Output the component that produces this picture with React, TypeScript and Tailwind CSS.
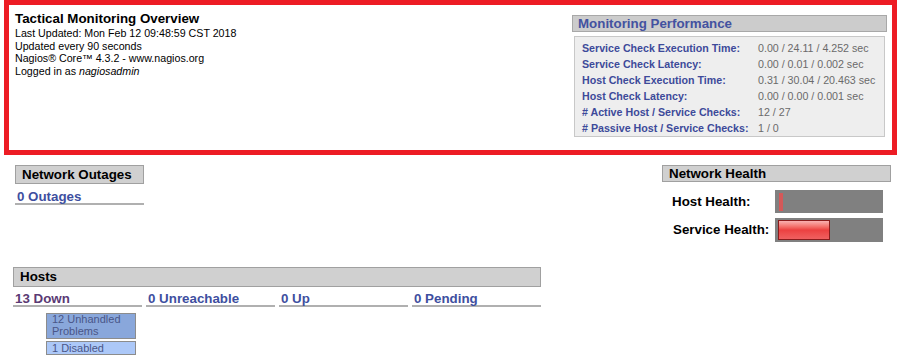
const font = { fontFamily: '"Liberation Sans", Arial, sans-serif' };

const perfRows = [
  ['Service Check Execution Time:', '0.00 / 24.11 / 4.252 sec'],
  ['Service Check Latency:', '0.00 / 0.01 / 0.002 sec'],
  ['Host Check Execution Time:', '0.31 / 30.04 / 20.463 sec'],
  ['Host Check Latency:', '0.00 / 0.00 / 0.001 sec'],
  ['# Active Host / Service Checks:', '12 / 27'],
  ['# Passive Host / Service Checks:', '1 / 0'],
];

const hostCols = [
  { label: '13 Down', color: 'text-[#5a3a74]' },
  { label: '0 Unreachable', color: 'text-[#3e4fa0]' },
  { label: '0 Up', color: 'text-[#3e4fa0]' },
  { label: '0 Pending', color: 'text-[#3e4fa0]' },
];

export default function App() {
  return (
    <div className="w-[904px] h-[357px] bg-white text-black overflow-hidden" style={font}>
      {/* Info + performance */}
      <div className="ml-[4px] w-[893px] h-[155px] border-[5px] border-[#ed1c24] flex justify-between">
        <div className="pl-[6px] pt-[6px]">
          <div className="text-[13.33px] font-bold leading-[15px]">Tactical Monitoring Overview</div>
          <div className="text-[10.67px] leading-[12.7px] mt-[1px]">
            <div>Last Updated: Mon Feb 12 09:48:59 CST 2018</div>
            <div>Updated every 90 seconds</div>
            <div>Nagios® Core™ 4.3.2 - www.nagios.org</div>
            <div>
              Logged in as <i>nagiosadmin</i>
            </div>
          </div>
        </div>

        <div className="mt-[10px] mr-[5px] w-[315px]">
          <div className="h-[17px] bg-[#cccccc] border border-[#a8a8a8] pl-[5px] text-[13.33px] leading-[15px] font-bold text-[#4352a0]">
            Monitoring Performance
          </div>
          <div className="ml-[2px] mt-[4px] w-[311px] h-[101px] bg-[#eeeeee] border border-[#c8c8c8] pt-[3px]">
            {perfRows.map(([label, value]) => (
              <div key={label} className="flex h-[16px] items-center text-[10.67px]">
                <div className="w-[183px] pl-[7px] font-bold text-[#3d4a9a]">{label}</div>
                <div className="text-[#6a6a6a]">{value}</div>
              </div>
            ))}
          </div>
        </div>
      </div>

      {/* Outages + health */}
      <div className="flex justify-between mt-[10px]">
        <div className="ml-[15px] w-[129px]">
          <div className="h-[19px] bg-[#d0d0d0] border border-[#a0a0a0] pl-[6px] text-[13.33px] leading-[17px] font-bold">
            Network Outages
          </div>
          <div className="h-[21px] border-b-2 border-[#b0b0b0] pl-[2px] text-[13.33px] leading-[25px] font-bold text-[#3e4fa0]">
            0 Outages
          </div>
        </div>

        <div className="mr-[13px] w-[229px]">
          <div className="h-[17px] bg-[#d0d0d0] border border-[#a0a0a0] pl-[6px] text-[13.33px] leading-[15px] font-bold">
            Network Health
          </div>
          <div className="flex items-center mt-[8px] h-[23px]">
            <div className="w-[113px] pl-[10px] text-[13.33px] font-bold">Host Health:</div>
            <div className="w-[108px] h-[23px] bg-[#808080] pl-[4px] pt-[3px]">
              <div className="w-[4px] h-[18px] bg-[#d45858]" />
            </div>
          </div>
          <div className="flex items-center mt-[5px] h-[24px]">
            <div className="w-[113px] pl-[11px] text-[13.33px] font-bold">Service Health:</div>
            <div className="w-[108px] h-[24px] bg-[#808080] pl-[3px] pt-[2px]">
              <div className="w-[52px] h-[20px] border border-[#8a1c1c] bg-gradient-to-b from-[#f8b0b0] via-[#ec4040] to-[#f06060]" />
            </div>
          </div>
        </div>
      </div>

      {/* Hosts */}
      <div className="ml-[13px] w-[528px] mt-[25px]">
        <div className="h-[20px] bg-[#d0d0d0] border border-[#a0a0a0] pl-[6px] text-[13.33px] leading-[18px] font-bold">
          Hosts
        </div>
        <div className="grid grid-cols-4 gap-x-[4px]">
          {hostCols.map((c) => (
            <div
              key={c.label}
              className={`h-[20px] border-b-2 border-[#b0b0b0] pl-[2px] text-[13.33px] leading-[23px] font-bold ${c.color}`}
            >
              {c.label}
            </div>
          ))}
        </div>
        <div className="ml-[33px] mt-[6px] w-[90px]">
          <div className="h-[26px] bg-[#89a7db] border border-[#8c8c8c] pl-[5px] text-[11px] leading-[11.5px] text-[#4a5688]">
            12 Unhandled
            <br />
            Problems
          </div>
          <div className="mt-[2px] h-[14px] bg-[#acc8f8] border border-[#8c8c8c] pl-[5px] text-[11px] leading-[12px] text-[#4a5688]">
            1 Disabled
          </div>
        </div>
      </div>
    </div>
  );
}
